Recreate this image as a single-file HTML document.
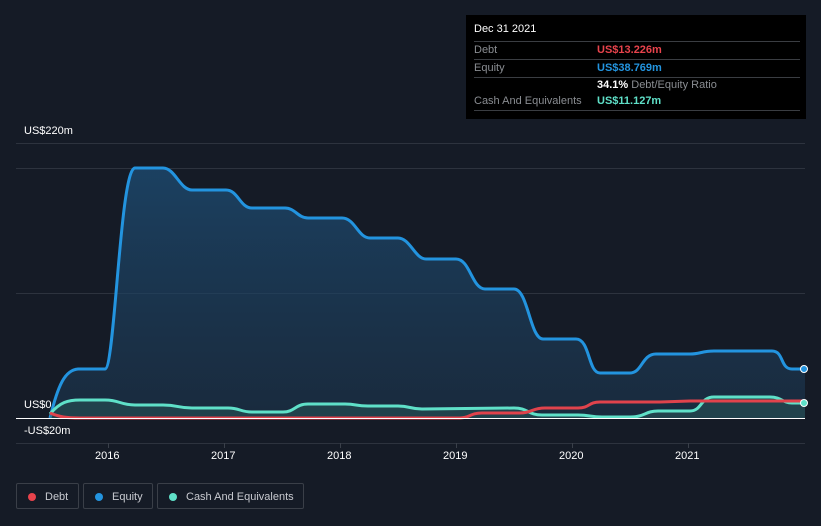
<!DOCTYPE html>
<html><head><style>
body{margin:0;background:#151b26;width:821px;height:526px;overflow:hidden;font-family:"Liberation Sans",sans-serif;position:relative}
.t{position:absolute;font-size:11px;color:#fff}
.tip{position:absolute;left:466px;top:15px;width:340px;height:104px;background:#000}
.row{position:absolute;left:8px;width:326px;border-bottom:1px solid #3a3d42;font-size:11px;color:#8a8d92;height:17px;line-height:17px}
.row b{font-weight:bold;position:absolute;left:123px}
.leg{position:absolute;top:483px;height:26px;border:1px solid #3a3f48;border-radius:2px;font-size:11px;color:#c8cad0;line-height:26px;box-sizing:border-box}
.leg i{position:absolute;left:11px;top:9px;width:8px;height:8px;border-radius:50%}
</style></head><body>
<svg width="821" height="526" style="position:absolute;left:0;top:0">
<g stroke="#2d333e" stroke-width="1"><line x1="16" y1="143.5" x2="805" y2="143.5"/><line x1="16" y1="168.5" x2="805" y2="168.5"/><line x1="16" y1="293.5" x2="805" y2="293.5"/><line x1="16" y1="443.5" x2="805" y2="443.5"/></g>
<g stroke="#3a404a"><line x1="108.5" y1="443" x2="108.5" y2="448"/><line x1="224.5" y1="443" x2="224.5" y2="448"/><line x1="340.5" y1="443" x2="340.5" y2="448"/><line x1="456.5" y1="443" x2="456.5" y2="448"/><line x1="572.5" y1="443" x2="572.5" y2="448"/><line x1="688.5" y1="443" x2="688.5" y2="448"/></g>
<defs><linearGradient id="g" x1="0" y1="0" x2="0" y2="1"><stop offset="0" stop-color="#1d4a70" stop-opacity=".8"/><stop offset="1" stop-color="#1d3a55" stop-opacity=".5"/></linearGradient></defs>
<path d="M50 418 C58 385 65 370 78 369 L105 369 C115 369 120 168 135 168 L163 168 C175 168 180 190 192 190 L226 190 C238 190 240 208 252 208 L285 208 C295 208 298 218 308 218 L342 218 C355 218 358 238 370 238 L398 238 C410 238 415 259 426 259 L456 259 C470 259 472 289 485 289 L514 289 C528 289 530 339 543 339 L576 339 C590 339 588 373 600 373 L630 373 C642 373 642 354 656 354 L690 354 C700 354 702 351 714 351 L772 351 C784 351 780 369 792 369 L805 369 L805 418 Z" fill="url(#g)"/>
<path d="M50 418 C58 385 65 370 78 369 L105 369 C115 369 120 168 135 168 L163 168 C175 168 180 190 192 190 L226 190 C238 190 240 208 252 208 L285 208 C295 208 298 218 308 218 L342 218 C355 218 358 238 370 238 L398 238 C410 238 415 259 426 259 L456 259 C470 259 472 289 485 289 L514 289 C528 289 530 339 543 339 L576 339 C590 339 588 373 600 373 L630 373 C642 373 642 354 656 354 L690 354 C700 354 702 351 714 351 L772 351 C784 351 780 369 792 369 L805 369" fill="none" stroke="#2394df" stroke-width="3"/>
<path d="M50 414 C60 402 68 400 80 400 L105 400 C120 400 120 405 135 405 L163 405 C178 405 178 408 192 408 L228 408 C240 408 240 412 252 412 L283 412 C295 412 295 404 308 404 L345 404 C357 404 355 406 368 406 L398 406 C410 406 410 409 422 409 L514 408 C528 408 528 415 542 415 L578 415 C590 415 590 417 602 417 L630 417 C645 417 645 411 658 411 L690 411 C702 411 700 397 714 397 L770 397 C782 397 782 403 792 403 L805 403 L805 418 L50 418 Z" fill="#2a5a5a" fill-opacity=".5"/>
<path d="M50 414 C60 402 68 400 80 400 L105 400 C120 400 120 405 135 405 L163 405 C178 405 178 408 192 408 L228 408 C240 408 240 412 252 412 L283 412 C295 412 295 404 308 404 L345 404 C357 404 355 406 368 406 L398 406 C410 406 410 409 422 409 L514 408 C528 408 528 415 542 415 L578 415 C590 415 590 417 602 417 L630 417 C645 417 645 411 658 411 L690 411 C702 411 700 397 714 397 L770 397 C782 397 782 403 792 403 L805 403" fill="none" stroke="#5fe0c8" stroke-width="3"/>
<path d="M50 413 C60 417 66 418 80 418 L460 418 C470 418 470 413 482 413 L520 413 C532 413 532 408 545 408 L578 408 C590 408 588 402 600 402 L660 402 L690 401 L805 401" fill="none" stroke="#e0434c" stroke-width="3"/>
<line x1="16" y1="418.5" x2="805" y2="418.5" stroke="#fff" stroke-width="1"/>
<circle cx="804" cy="369" r="3.5" fill="#2394df" stroke="#fff"/>
<circle cx="804" cy="403" r="3.5" fill="#5fe0c8" stroke="#fff"/>
</svg>
<div class="t" style="left:24px;top:125px">US$220m</div>
<div class="t" style="left:24px;top:399px">US$0</div>
<div class="t" style="left:24px;top:425px">-US$20m</div>
<div class="t" style="left:95px;top:450px">2016</div>
<div class="t" style="left:211px;top:450px">2017</div>
<div class="t" style="left:327px;top:450px">2018</div>
<div class="t" style="left:443px;top:450px">2019</div>
<div class="t" style="left:559px;top:450px">2020</div>
<div class="t" style="left:675px;top:450px">2021</div>
<div class="tip">
<div style="position:absolute;left:8px;top:8px;font-size:11px;color:#fff">Dec 31 2021</div>
<div style="position:absolute;left:8px;top:26px;width:326px;border-top:1px solid #3a3d42"></div>
<div class="row" style="top:27px">Debt<b style="color:#e8434c">US$13.226m</b></div>
<div class="row" style="top:45px">Equity<b style="color:#2394df">US$38.769m</b></div>
<div class="row" style="top:62px;border:none"><b style="color:#fff;font-weight:bold">34.1% <span style="color:#8a8d92;font-weight:normal">Debt/Equity Ratio</span></b></div>
<div class="row" style="top:78px">Cash And Equivalents<b style="color:#5fe0c8">US$11.127m</b></div>
</div>
<div class="leg" style="left:16px;width:63px"><i style="background:#e8434c"></i><span style="position:absolute;left:28px">Debt</span></div>
<div class="leg" style="left:83px;width:70px"><i style="background:#2394df"></i><span style="position:absolute;left:28px">Equity</span></div>
<div class="leg" style="left:157px;width:147px"><i style="background:#5fe0c8"></i><span style="position:absolute;left:28px">Cash And Equivalents</span></div>
</body></html>
